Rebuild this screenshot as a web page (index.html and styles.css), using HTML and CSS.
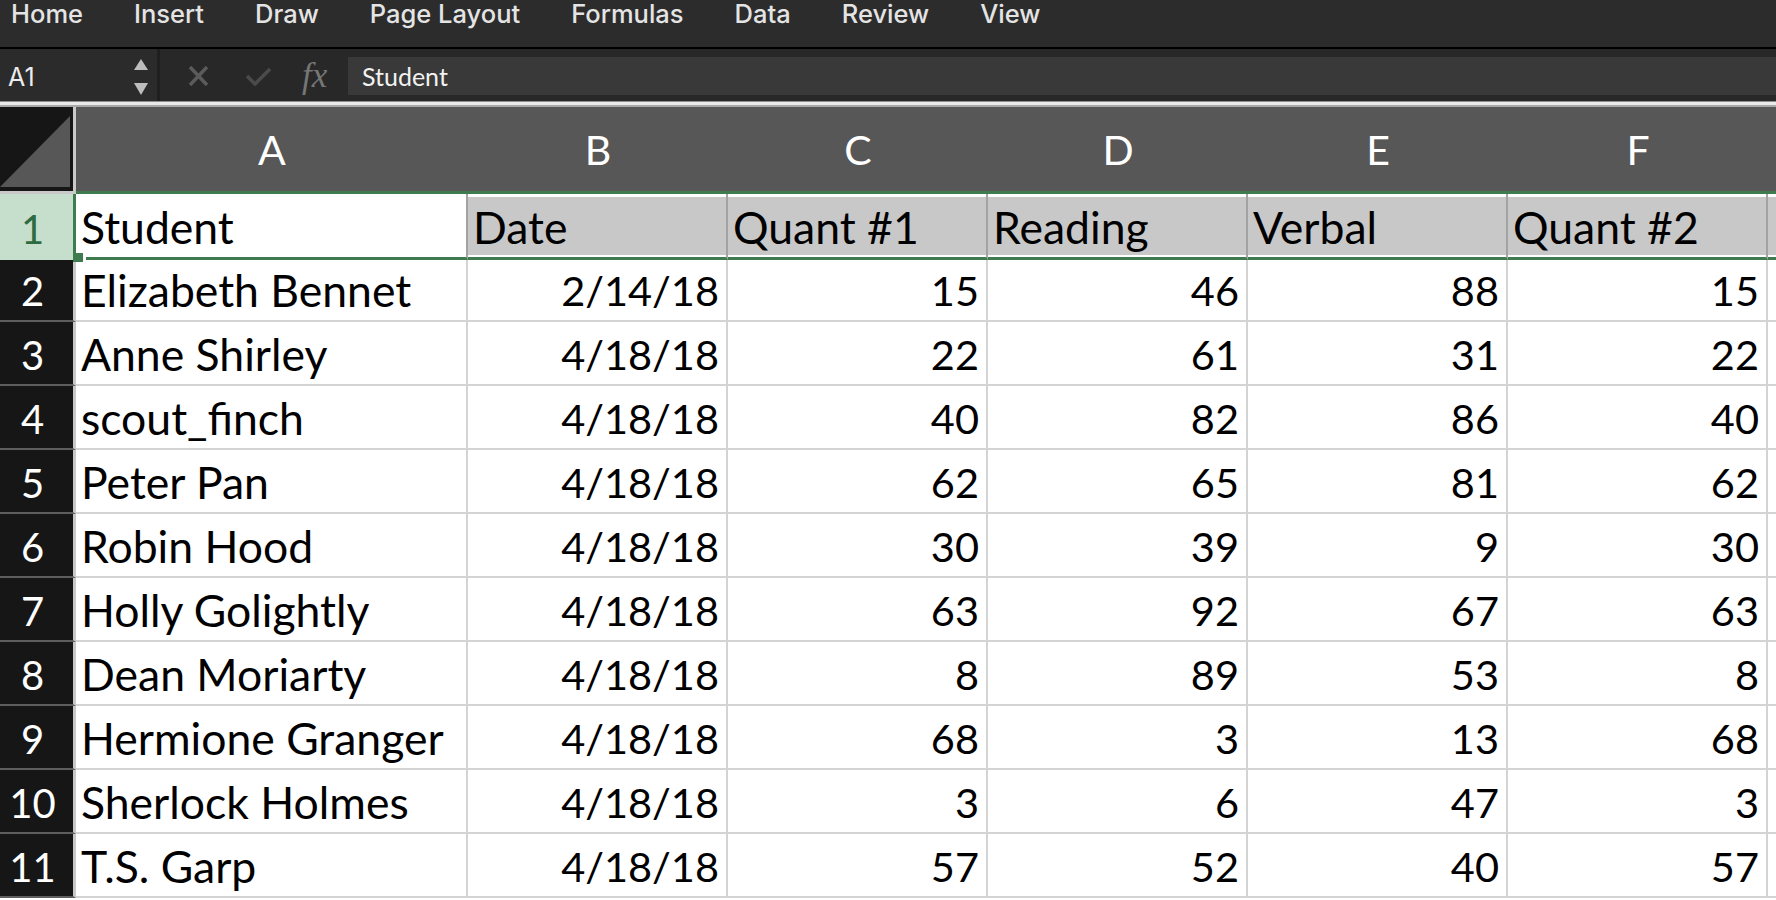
FILE: index.html
```html
<!DOCTYPE html>
<html lang="en">
<head>
  <meta charset="UTF-8">
  <title>Student Scores</title>
  <link rel="stylesheet" href="styles.css">
</head>
<body>
  <div class="menubar">
    <span>Home</span>
    <span>Insert</span>
    <span>Draw</span>
    <span>Page Layout</span>
    <span>Formulas</span>
    <span>Data</span>
    <span>Review</span>
    <span>View</span>
  </div>

  <div class="formula-bar">
    <div class="name-box">
      <span>A1</span>
      <svg class="spinner" width="14" height="36" viewBox="0 0 14 36">
        <polygon points="7,0 14,11 0,11" fill="#bdbdbd"/>
        <polygon points="0,24 14,24 7,36" fill="#bdbdbd"/>
      </svg>
    </div>
    <div class="formula-tools">
      <svg class="icon-cross" width="23" height="20" viewBox="0 0 23 20">
        <path d="M3 1 L20 19 M20 1 L3 19" stroke="#5b5b5b" stroke-width="3.5" fill="none"/>
      </svg>
      <svg class="icon-check" width="27" height="19" viewBox="0 0 27 19">
        <path d="M2 9 L10 17 L25 2" stroke="#4b4b4b" stroke-width="3.5" fill="none"/>
      </svg>
      <span class="fx">fx</span>
    </div>
    <div class="formula-input">Student</div>
  </div>

  <div class="sheet-edge"></div>

  <div class="sheet" id="sheet">
    <div class="corner">
      <svg width="70" height="82" viewBox="0 0 70 82">
        <polygon points="0,80 70,9 70,80" fill="#575757"/>
      </svg>
    </div>
    <div class="col-head">A</div>
    <div class="col-head">B</div>
    <div class="col-head">C</div>
    <div class="col-head">D</div>
    <div class="col-head">E</div>
    <div class="col-head">F</div>
    <div class="col-head"></div>
  </div>

  <script>
    const header = ['Student', 'Date', 'Quant #1', 'Reading', 'Verbal', 'Quant #2'];

    const rows = [
      ['Elizabeth Bennet', '2/14/18', 15, 46, 88, 15],
      ['Anne Shirley', '4/18/18', 22, 61, 31, 22],
      ['scout_finch', '4/18/18', 40, 82, 86, 40],
      ['Peter Pan', '4/18/18', 62, 65, 81, 62],
      ['Robin Hood', '4/18/18', 30, 39, 9, 30],
      ['Holly Golightly', '4/18/18', 63, 92, 67, 63],
      ['Dean Moriarty', '4/18/18', 8, 89, 53, 8],
      ['Hermione Granger', '4/18/18', 68, 3, 13, 68],
      ['Sherlock Holmes', '4/18/18', 3, 6, 47, 3],
      ['T.S. Garp', '4/18/18', 57, 52, 40, 57]
    ];

    const sheet = document.getElementById('sheet');

    function addCell(text, cls) {
      const div = document.createElement('div');
      div.className = cls;
      div.textContent = text;
      sheet.appendChild(div);
      return div;
    }

    // row 1 is the selected row, A1 the active cell
    addCell('1', 'row-head active');
    header.forEach((h, i) => {
      const c = addCell(h, i === 0 ? 'cell sel active' : 'cell sel');
      if (i === 0) {
        const handle = document.createElement('span');
        handle.className = 'fill-handle';
        c.appendChild(handle);
      }
    });
    addCell('', 'cell sel');

    rows.forEach((r, n) => {
      addCell(String(n + 2), 'row-head');
      r.forEach((v, i) => addCell(v, i === 0 ? 'cell' : 'cell num'));
      addCell('', 'cell');
    });
  </script>
</body>
</html>
```

FILE: styles.css
```css
body {
  margin: 0;
  height: 900px;
  overflow: hidden;
  background: #282828;
  font-family: "Inter", "Noto Sans", sans-serif;
  display: flex;
  flex-direction: column;
}

.menubar {
  height: 46px;
  padding: 1px 0 0 11px;
  border-bottom: 2px solid #000;
  background: #2c2c2c;
  color: #e4e4e4;
  font-size: 25.5px;
  font-weight: 500;
  line-height: 25px;
  display: flex;
  gap: 51px;
}

.formula-bar {
  height: 52px;
  display: flex;
  background: #282828;
}

.name-box {
  box-sizing: border-box;
  width: 160px;
  padding: 4px 9px 0 8px;
  background: #2b2b2b;
  border-right: 3px solid #1f1f1f;
  color: #ececec;
  font-size: 25px;
  display: flex;
  align-items: center;
  justify-content: space-between;
}

.formula-tools {
  width: 188px;
  padding: 2px 0 0 27px;
  box-sizing: border-box;
  display: flex;
  align-items: center;
}

.icon-cross {
  margin-right: 35px;
}

.icon-check {
  margin-right: 30px;
}

.fx {
  font-family: "Liberation Serif", serif;
  font-style: italic;
  font-size: 35px;
  color: #767676;
}

.formula-input {
  flex: 1;
  margin: 8px 0 6px;
  padding-left: 14px;
  background: #393939;
  color: #f2f2f2;
  font-family: "Lato", sans-serif;
  font-size: 25px;
  display: flex;
  align-items: center;
}

.sheet-edge {
  height: 6px;
  background: linear-gradient(#8d8d8d 0 1px, #e9e9e9 1px 4px, #a8a8a8 4px 6px);
}

.sheet {
  flex: 1;
  display: grid;
  grid-template-columns: 76px 392px repeat(5, 260px) 1fr;
  grid-template-rows: 87px 66px 62px repeat(9, 64px);
  background: #fff;
  font-family: "Lato", sans-serif;
}

.sheet > div {
  box-sizing: border-box;
}

.corner {
  background: #161616;
  border-right: 3px solid #c9c9c9;
  border-bottom: 3px solid #c9c9c9;
}

.corner svg {
  display: block;
}

.col-head {
  background: #575757;
  border-bottom: 3px solid #3e7b4f;
  color: #fff;
  font-size: 41px;
  display: flex;
  align-items: center;
  justify-content: center;
}

.row-head {
  background: #161616;
  border-right: 3px solid #c9c9c9;
  border-bottom: 2px solid #5e5e5e;
  color: #fff;
  font-size: 40px;
  line-height: 1;
  padding: 0 8px 9px 0;
  display: flex;
  align-items: flex-end;
  justify-content: center;
}

.row-head.active {
  background: #c6dfcd;
  color: #2f6b40;
  border-right-color: #3e7b4f;
  border-bottom: 3px solid #c6dfcd;
  padding-bottom: 8px;
}

.cell {
  border-right: 2px solid #d4d4d4;
  border-bottom: 2px solid #d4d4d4;
  color: #000;
  font-size: 44.5px;
  line-height: 1;
  padding: 0 7px 8px 5px;
  white-space: nowrap;
  overflow: hidden;
  display: flex;
  align-items: flex-end;
}

.cell.num {
  font-size: 41.5px;
  padding-bottom: 9px;
  justify-content: flex-end;
}

.cell.sel {
  background: #c8c8c8;
  box-shadow: inset 0 3px 0 #fff, inset 0 -2px 0 #fff;
  border-right-color: #a3a3a3;
  border-bottom: 3px solid #3e7b4f;
  padding-bottom: 8px;
}

.cell.active {
  background: #fff;
  position: relative;
  overflow: visible;
}

.fill-handle {
  position: absolute;
  left: -3px;
  bottom: -5px;
  width: 10px;
  height: 9px;
  background: #3e7b4f;
  border-right: 3px solid #fff;
}
```
